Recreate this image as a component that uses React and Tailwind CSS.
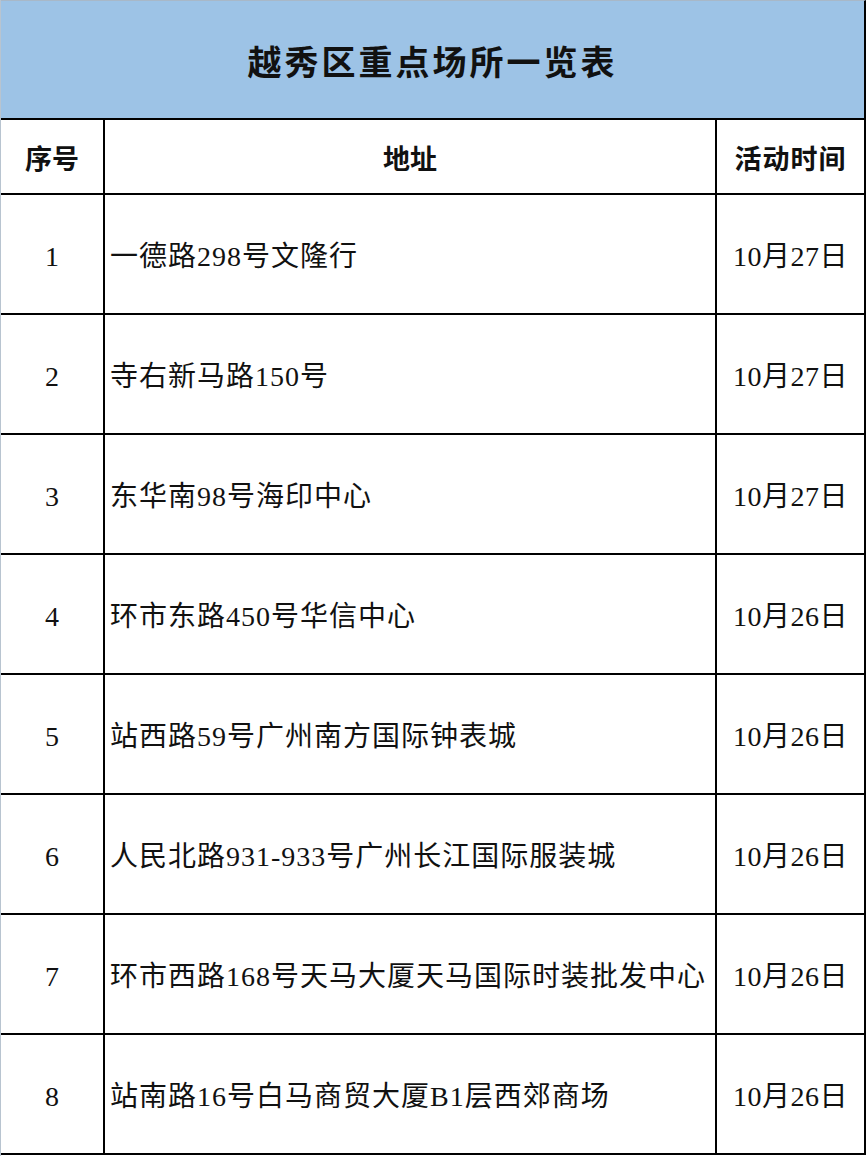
import React from 'react';

const ROWS = [
  { no: 1, address: '一德路298号文隆行', date: '10月27日' },
  { no: 2, address: '寺右新马路150号', date: '10月27日' },
  { no: 3, address: '东华南98号海印中心', date: '10月27日' },
  { no: 4, address: '环市东路450号华信中心', date: '10月26日' },
  { no: 5, address: '站西路59号广州南方国际钟表城', date: '10月26日' },
  { no: 6, address: '人民北路931-933号广州长江国际服装城', date: '10月26日' },
  { no: 7, address: '环市西路168号天马大厦天马国际时装批发中心', date: '10月26日' },
  { no: 8, address: '站南路16号白马商贸大厦B1层西郊商场', date: '10月26日' },
];

const serif = { fontFamily: '"Liberation Serif", "Noto Sans CJK SC", serif' };
const sans = { fontFamily: '"Noto Sans CJK SC", "Liberation Sans", sans-serif' };

export default function App() {
  return (
    <div className="w-[866px] h-[1156px] bg-white border-l border-[#b8c4d0] text-[#111]">
      {/* Title band */}
      <div
        className="h-[120px] bg-[#9dc3e6] border-t border-[#a8b8c8] border-b-2 border-b-black border-r-2 border-r-black flex items-center justify-center"
        style={sans}
      >
        <h1 className="text-[34px] font-bold tracking-[3px] leading-none pt-[3px]">越秀区重点场所一览表</h1>
      </div>

      {/* Header row */}
      <div className="grid grid-cols-[104px_612px_149px] h-[75px] border-b-2 border-black" style={sans}>
        <div className="border-r-2 border-black flex items-center justify-center text-[27px] font-bold pt-[4px]">序号</div>
        <div className="border-r-2 border-black flex items-center justify-center text-[27px] font-bold pt-[4px]">地址</div>
        <div className="border-r-2 border-black flex items-center justify-center text-[27px] font-bold tracking-[1px] pt-[4px]">活动时间</div>
      </div>

      {/* Data rows */}
      {ROWS.map((row) => (
        <div
          key={row.no}
          className="grid grid-cols-[104px_612px_149px] h-[120px] border-b-2 border-black"
          style={serif}
        >
          <div className="border-r-2 border-black flex items-center justify-center text-[28px] pt-[5px]">{row.no}</div>
          <div className="border-r-2 border-black flex items-center pl-[5px] text-[28px] tracking-[1px] whitespace-nowrap pt-[5px]">
            {row.address}
          </div>
          <div className="border-r-2 border-black flex items-center justify-center text-[28px] tracking-[0.5px] pt-[5px]">
            {row.date}
          </div>
        </div>
      ))}
    </div>
  );
}
